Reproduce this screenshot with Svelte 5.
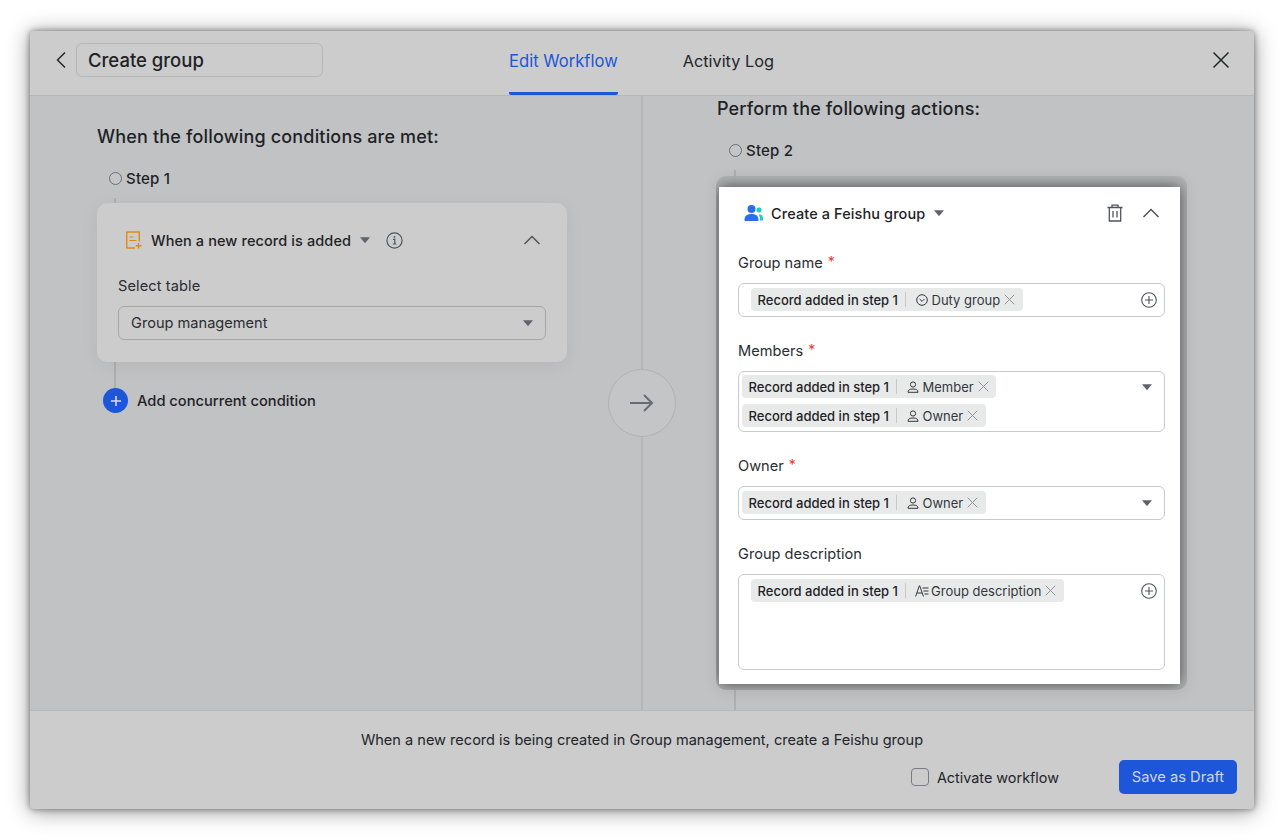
<script>
  const fields = [
    { label: 'Group name', required: true, kind: 'wide', pills: [{ text: 'Duty group', icon: 'option' }], end: 'plus' },
    { label: 'Members', required: true, kind: 'tight', pills: [{ text: 'Member', icon: 'person' }, { text: 'Owner', icon: 'person' }], end: 'caret' },
    { label: 'Owner', required: true, kind: 'tight solo', pills: [{ text: 'Owner', icon: 'person' }], end: 'caret' },
    { label: 'Group description', required: false, kind: 'wide tall', pills: [{ text: 'Group description', icon: 'text' }], end: 'plus' }
  ];
</script>

{#snippet caret(cls)}
  <svg class={cls} width="10" height="6" viewBox="0 0 10 6"><path d="M0 0.3h10L5.6 5.6a.8.8 0 0 1-1.2 0z" fill="#5f646c"/></svg>
{/snippet}

{#snippet chevUp()}
  <svg width="18" height="10" viewBox="0 0 18 10" fill="none"><path d="M1.5 9L9 1.5 16.5 9" stroke="#4a4f57" stroke-width="1.4"/></svg>
{/snippet}

<div class="page">
  <div class="window">
    <header class="top">
      <svg class="back" width="12" height="18" viewBox="0 0 12 18" fill="none"><path d="M10 1.5L2.5 9l7.5 7.5" stroke="#22252a" stroke-width="1.5"/></svg>
      <div class="name">Create group</div>
      <nav class="tabs">
        <div class="tab active">Edit Workflow</div>
        <div class="tab">Activity Log</div>
      </nav>
      <svg class="close" width="18" height="18" viewBox="0 0 18 18" fill="none"><path d="M1.5 1.5l15 15M16.5 1.5l-15 15" stroke="#22252a" stroke-width="1.5"/></svg>
    </header>

    <main class="body">
      <section class="left">
        <h2 class="h-left">When the following conditions are met:</h2>
        <div class="flow">
          <div class="step"><span class="dot"></span>Step 1</div>
          <div class="card">
            <div class="card-head">
              <svg class="rec" width="18" height="18" viewBox="0 0 18 18" fill="none">
                <path d="M10 17H1.7V1h12.6v9.5" stroke="#e08a12" stroke-width="1.4"/>
                <path d="M4.5 6h4M4.5 9.5h7" stroke="#e08a12" stroke-width="1.2"/>
                <path d="M13.5 12v5.5M10.8 14.8h5.6" stroke="#e08a12" stroke-width="1.4"/>
              </svg>
              <span class="title">When a new record is added</span>
              {@render caret('cap')}
              <svg class="info" width="17" height="17" viewBox="0 0 17 17" fill="none">
                <circle cx="8.5" cy="8.5" r="7.6" stroke="#4f545c" stroke-width="1.2"/>
                <path d="M7 7.3h1.8v4.6M6.8 12h3.6" stroke="#4f545c" stroke-width="1.2"/>
                <circle cx="8.5" cy="4.9" r=".9" fill="#4f545c"/>
              </svg>
              <span class="chev-end">{@render chevUp()}</span>
            </div>
            <div class="lab">Select table</div>
            <div class="select">
              <span>Group management</span>
              {@render caret('')}
            </div>
          </div>
          <div class="add">
            <span class="add-btn">
              <svg width="12" height="12" viewBox="0 0 12 12"><path d="M6 1v10M1 6h10" stroke="#d8dde8" stroke-width="1.6"/></svg>
            </span>
            Add concurrent condition
          </div>
        </div>
      </section>

      <div class="arrow">
        <svg width="26" height="20" viewBox="0 0 26 20" fill="none"><path d="M1 10h22M15 2l8 8-8 8" stroke="#666c75" stroke-width="2"/></svg>
      </div>

      <section class="right">
        <h2 class="h-right">Perform the following actions:</h2>
        <div class="flow flow-r">
          <div class="step"><span class="dot"></span>Step 2</div>
          <div class="frame">
            <div class="sheet">
              <div class="sheet-head">
                <svg class="grp" width="20" height="18" viewBox="0 0 20 18">
                  <circle cx="7.5" cy="5" r="4" fill="#2a6df0"/>
                  <path d="M0.5 16c0-4 2.5-6 7-6s7 2 7 6c0 .7-.4 1-1 1h-12c-.6 0-1-.3-1-1z" fill="#2a6df0"/>
                  <rect x="12.5" y="3.5" width="5" height="5" rx="2" fill="#1fd1b4"/>
                  <path d="M15.5 10.5c2.2 0 3.5 1.5 3.5 4v2h-3c0-2.5-.3-4.3-1.5-6z" fill="#1fd1b4"/>
                </svg>
                <span class="title">Create a Feishu group</span>
                {@render caret('cap')}
                <svg class="trash" width="16" height="18" viewBox="0 0 16 18" fill="none">
                  <path d="M0.5 3.5h15M5 3V1.2h6V3M2.3 3.5V17h11.4V3.5M6 7v6.5M10 7v6.5" stroke="#4f545c" stroke-width="1.3"/>
                </svg>
                <span class="chev-sheet">{@render chevUp()}</span>
              </div>

              {#each fields as f}
                <div class="lab f-lab">{f.label}{#if f.required}<i class="req">*</i>{/if}</div>
                <div class="box {f.kind}">
                  <div class="pills">
                    {#each f.pills as p}
                      <div class="pill">
                        <b>Record added in step 1</b>
                        <span class="sep"></span>
                        {#if p.icon === 'option'}
                          <svg width="12" height="12" viewBox="0 0 12 12" fill="none"><circle cx="6" cy="6" r="5.3" stroke="#33373d" stroke-width="1"/><path d="M3.6 5l2.4 2.4L8.4 5" stroke="#33373d"/></svg>
                        {:else if p.icon === 'person'}
                          <svg width="12" height="12" viewBox="0 0 12 12" fill="none"><circle cx="6" cy="3.5" r="2.6" stroke="#33373d"/><path d="M1 11.3c0-2.3 1.500-3.300 5-3.300s5 1 5 3.300z" stroke="#33373d"/></svg>
                        {:else}
                          <svg class="tico" width="14" height="12" viewBox="0 0 14 12" fill="none"><path d="M.6 11.500L4.300.8h.4l3.800 10.700M2 8h5" stroke="#33373d"/><path d="M7.500 3h6M8.500 6h5M9.500 9h4" stroke="#33373d"/></svg>
                        {/if}
                        <span class="pt">{p.text}</span>
                        <svg class="x" width="11" height="11" viewBox="0 0 11 11" fill="none"><path d="M.7.7l9.600 9.600M10.300.7L.7 10.300" stroke="#8f9399"/></svg>
                      </div>
                    {/each}
                  </div>
                  {#if f.end === 'plus'}
                    <svg class="plus" width="16" height="16" viewBox="0 0 16 16" fill="none"><circle cx="8" cy="8" r="7.3" stroke="#4f545c" stroke-width="1.1"/><path d="M8 4v8M4 8h8" stroke="#4f545c" stroke-width="1.1"/></svg>
                  {:else}
                    {@render caret('cap-box')}
                  {/if}
                </div>
              {/each}
            </div>
          </div>
        </div>
      </section>
    </main>

    <footer class="foot">
      <div class="sum">When a new record is being created in Group management, create a Feishu group</div>
      <div class="acts">
        <span class="check"></span>
        <span class="act">Activate workflow</span>
        <div class="save">Save as Draft</div>
      </div>
    </footer>
  </div>
</div>

<style>
  :global(body) {
    margin: 0;
    background: #fff;
  }
  .page {
    box-sizing: border-box;
    width: 1284px;
    height: 840px;
    padding: 31px 30px;
    font-family: Inter, "Liberation Sans", sans-serif;
    color: #1f2226;
    overflow: hidden;
  }
  .window {
    height: 778px;
    display: flex;
    flex-direction: column;
    background: #c1c2c4;
    border-radius: 4px;
    box-shadow: 0 0 6px rgba(0, 0, 0, 0.45), 0 2px 22px rgba(0, 0, 0, 0.42);
    overflow: hidden;
  }
  .top {
    flex: none;
    height: 65px;
    box-sizing: border-box;
    display: flex;
    align-items: center;
    background: #cccccc;
    border-bottom: 1px solid #b5b6b8;
    padding: 0 24px 7px 25px;
  }
  .back { flex: none; }
  .name {
    box-sizing: border-box;
    width: 247px;
    height: 34px;
    margin-left: 9px;
    padding-left: 11px;
    border: 1px solid #b5b6b8;
    border-radius: 6px;
    font-size: 18.5px;
    font-weight: 500;
    line-height: 32px;
  }
  .tabs {
    display: flex;
    gap: 65px;
    margin-left: 186px;
    align-self: stretch;
    margin-bottom: -7px;
  }
  .tab {
    font-size: 16.3px;
    line-height: 60px;
    height: 64px;
    box-sizing: border-box;
    color: #22252a;
  }
  .tab.active {
    color: #1d56d8;
    font-size: 16.6px;
    border-bottom: 3px solid #1d56d8;
    border-radius: 0 0 2px 2px;
  }
  .close { margin-left: auto; }

  .body {
    flex: 1;
    min-height: 0;
    display: flex;
    position: relative;
  }
  .left {
    box-sizing: border-box;
    width: 613px;
    padding: 29px 0 0 67px;
    border-right: 2px solid #b5b6b8;
  }
  .right {
    flex: 1;
    padding: 0 0 0 74px;
    overflow: hidden;
  }
  h2 {
    margin: 0;
    font-size: 18px;
    line-height: 24px;
    font-weight: 500;
    letter-spacing: 0.17px;
  }
  .flow { position: relative; }
  .flow::before {
    content: "";
    position: absolute;
    left: 17px;
    top: 30px;
    width: 2px;
    height: 205px;
    background: #aeafb1;
  }
  .flow-r::before {
    height: 600px;
  }
  .h-left { margin-bottom: 19px; }
  .h-right { margin-bottom: 19px; padding-top: 1px; }
  .step {
    position: relative;
    display: flex;
    align-items: center;
    height: 20px;
    padding-left: 12px;
    font-size: 15px;
    font-weight: 500;
    letter-spacing: 0.2px;
  }
  .dot {
    box-sizing: border-box;
    width: 13px;
    height: 13px;
    margin-right: 4px;
    border: 1px solid #6a6e75;
    border-radius: 50%;
    background: #c4c5c7;
  }
  .card {
    position: relative;
    box-sizing: border-box;
    width: 470px;
    height: 159px;
    margin-top: 15px;
    padding: 27px 21px 0;
    background: #cccccc;
    border-radius: 10px;
    box-shadow: 0 4px 18px rgba(0, 0, 0, 0.06);
  }
  .card-head {
    display: flex;
    align-items: center;
    height: 20px;
    padding-left: 7px;
  }
  .rec { flex: none; margin-right: 8px; }
  .title {
    font-size: 14.5px;
    font-weight: 500;
    letter-spacing: 0.1px;
  }
  .cap { flex: none; margin-left: 9px; }
  .info { margin-left: 16px; }
  .chev-end { margin-left: auto; margin-right: 5px; display: flex; }
  .lab {
    font-size: 14.6px;
    line-height: 20px;
    color: #2a2d32;
  }
  .card .lab { margin-top: 26px; letter-spacing: 0.1px; }
  .select {
    box-sizing: border-box;
    height: 34px;
    margin-top: 10px;
    padding: 0 12px;
    display: flex;
    align-items: center;
    justify-content: space-between;
    border: 1px solid #a5a6a8;
    border-radius: 6px;
    font-size: 14.6px;
    color: #2a2d32;
  }
  .add {
    position: relative;
    display: flex;
    align-items: center;
    gap: 9px;
    margin: 26px 0 0 6px;
    font-size: 14.7px;
    font-weight: 500;
  }
  .add-btn {
    width: 25px;
    height: 25px;
    border-radius: 50%;
    background: #1d56d8;
    display: flex;
    align-items: center;
    justify-content: center;
  }
  .arrow {
    position: absolute;
    left: 578px;
    top: 273px;
    box-sizing: border-box;
    width: 68px;
    height: 68px;
    border: 1px solid #b0b1b3;
    border-radius: 50%;
    background: #c4c5c7;
    display: flex;
    align-items: center;
    justify-content: center;
  }
  .frame {
    position: relative;
    box-sizing: border-box;
    width: 471px;
    height: 514px;
    margin: 16px 0 0 -1px;
    padding: 11px 7px 6px 3px;
    background: #b2b3b5;
    border-radius: 10px;
    box-shadow: 0 2px 14px rgba(0, 0, 0, 0.08);
    overflow: hidden;
  }
  .sheet {
    box-sizing: border-box;
    height: 497px;
    padding: 0 15px 0 19px;
    background: #fff;
    box-shadow: 0 0 14px rgba(0, 0, 0, 0.6);
  }
  .sheet-head {
    display: flex;
    align-items: center;
    height: 52px;
    padding: 0 0 0 6px;
  }
  .grp { flex: none; margin-right: 7px; }
  .trash { margin-left: auto; }
  .chev-sheet { display: flex; margin-left: 19px; margin-right: 5px; }
  .f-lab { height: 20px; }
  .sheet-head + .f-lab { margin-top: 14px; }
  .req {
    color: #f0353a;
    font-style: normal;
    margin-left: 5px;
    font-size: 14px;
    position: relative;
    top: -1px;
  }
  .box {
    box-sizing: border-box;
    display: flex;
    align-items: flex-start;
    justify-content: space-between;
    margin-top: 10px;
    margin-bottom: 24px;
    min-height: 34px;
    border: 1px solid #c9cacc;
    border-radius: 6px;
  }
  .box.wide { padding: 4px 7px 4px 12px; }
  .box.tight { padding: 3px 12px 4px 3px; }
  .box.tight.solo { padding-top: 4px; }
  .box.tall { height: 96px; }
  .pills {
    display: flex;
    flex-direction: column;
    align-items: flex-start;
    gap: 6px;
  }
  .pill {
    display: flex;
    align-items: center;
    height: 23px;
    padding: 0 7.5px 0 6.5px;
    background: #e8eaea;
    border-radius: 4px;
    font-size: 13px;
    white-space: nowrap;
  }
  .pill b { font-weight: 500; color: #1f2226; }
  .sep {
    width: 1px;
    height: 15px;
    background: #c6c8ca;
    margin: 0 9.5px 0 7px;
  }
  .tico { margin: 0 -1.5px 0 -1px; }
  .pt { margin-left: 4px; color: #33373d; }
  .x { margin-left: 4px; }
  .plus { flex: none; margin-top: 4px; }
  :global(.cap-box) { margin-top: 9px; }
  .foot {
    flex: none;
    height: 99px;
    box-sizing: border-box;
    background: #cccccc;
    border-top: 1px solid #b5b6b8;
    padding-top: 19px;
  }
  .sum {
    text-align: center;
    font-size: 14.55px;
    line-height: 20px;
    color: #22252a;
  }
  .acts {
    display: flex;
    align-items: center;
    justify-content: flex-end;
    margin-top: 10px;
    padding-right: 17px;
  }
  .check {
    box-sizing: border-box;
    width: 18px;
    height: 18px;
    border: 1.5px solid #777b82;
    border-radius: 4px;
  }
  .act {
    margin-left: 8px;
    font-size: 14.4px;
    color: #22252a;
  }
  .save {
    box-sizing: border-box;
    width: 118px;
    height: 34px;
    margin-left: 60px;
    text-align: center;
    line-height: 34px;
    font-size: 14.7px;
    color: #cfd6e6;
    background: #1d56d8;
    border-radius: 5px;
  }
</style>
